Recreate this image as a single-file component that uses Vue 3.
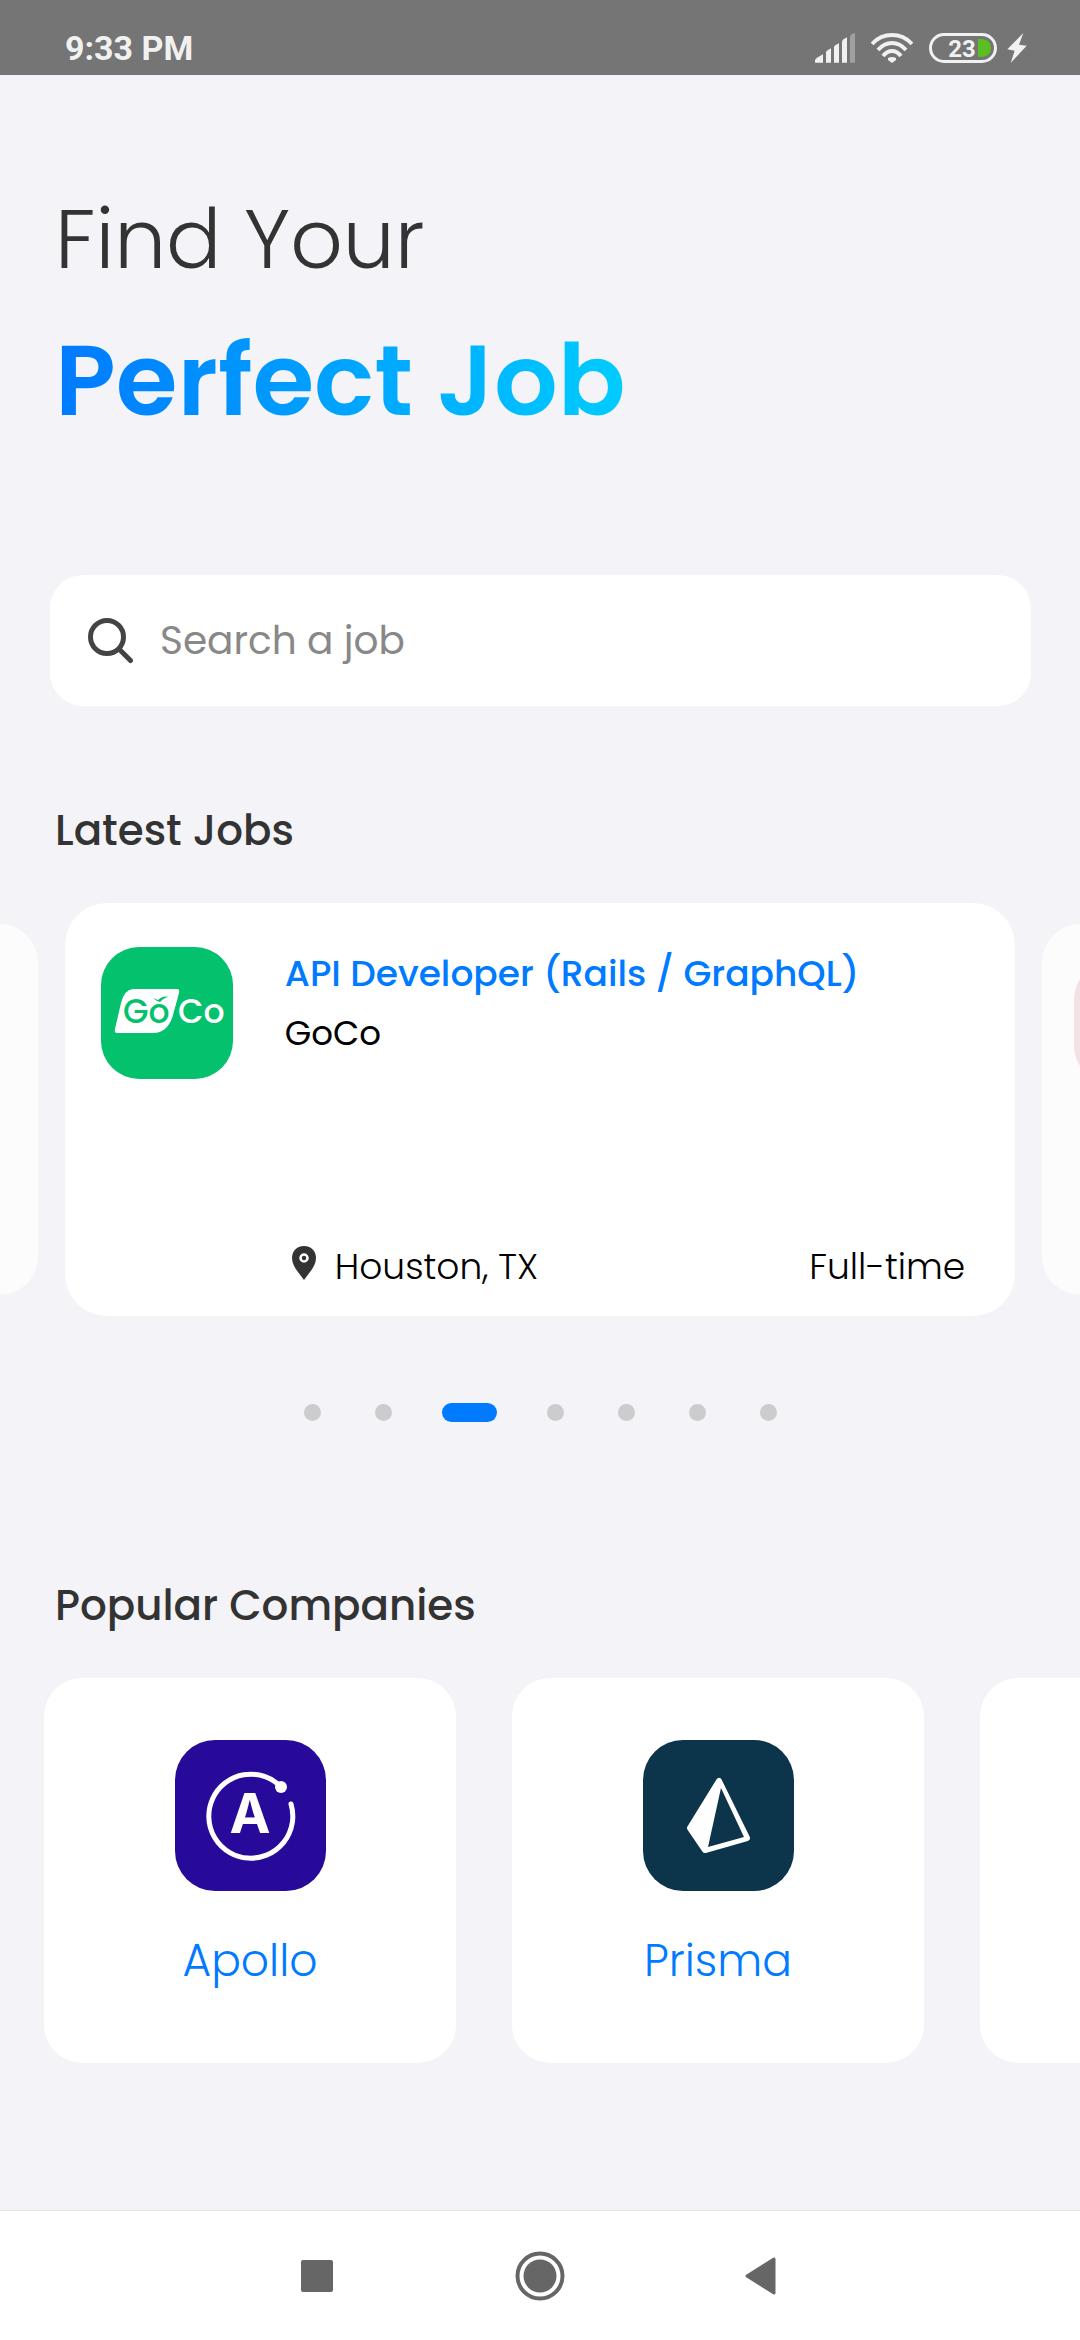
<script setup>
import { ref } from 'vue'

const query = ref('')
const activeJob = ref(2)
const jobCount = 7
const companies = [
  { name: 'Apollo', logo: 'apollo' },
  { name: 'Prisma', logo: 'prisma' },
  { name: '', logo: '' },
]
</script>

<template>
  <div class="screen">
    <div class="status">
      <span class="clock">9:33 PM</span>
      <div class="status-icons">
        <svg width="40" height="30" viewBox="0 0 120 90" fill="#f1f1f1" aria-hidden="true">
          <path d="M0 89V82Q1 77 6 74L24 64V89Z" />
          <path d="M33 89V58Q34 53 39 51L48 46V89Z" />
          <path d="M57 89V42Q58 37 63 35L72 31V89Z" />
          <path d="M81 89V26Q82 20 87 18L96 13V89Z" />
          <path d="M105 89V10Q106 5 111 3L120 0V89Z" fill="#a0a0a0" />
        </svg>
        <svg width="42" height="30" viewBox="0 0 42 30" fill="none" stroke="#f1f1f1" stroke-width="4" aria-hidden="true">
          <path d="M1 11Q9 2 21 2T41 11" />
          <path d="M7 17Q13 10 21 10T35 17" />
          <path d="M12 23Q16 18 21 18T30 23" />
          <path d="M17 25Q21 23 25 25V27L21 30L17 27Z" fill="#f1f1f1" stroke="none" />
        </svg>
        <svg class="battery" width="68" height="30" viewBox="0 0 68 30" aria-hidden="true">
          <rect x="1.5" y="1.5" width="65" height="27" rx="13.5" fill="none" stroke="#f1f1f1" stroke-width="3" />
          <path d="M49 6H53Q62 7 62 15T53 24H49Z" fill="#5bbf21" />
          <text x="33" y="24" text-anchor="middle">23</text>
        </svg>
        <svg class="bolt" width="20" height="30" viewBox="0 0 58 90" fill="#f1f1f1" aria-hidden="true">
          <path d="M48 0L0 49L22 53L10 90L58 38L35 35Z" />
        </svg>
      </div>
    </div>

    <main>
      <h1>
        <span class="lead">Find Your</span>
        <span class="headline">Perfect Job</span>
      </h1>

      <form class="search" role="search" @submit.prevent>
        <label for="job-search" aria-label="Search a job">
          <svg width="46" height="46" viewBox="0 0 46 46" fill="none" stroke="#444" stroke-width="5" stroke-linecap="round">
            <circle cx="19" cy="19" r="16.5" />
            <path d="M31 31L42.500 42.500" />
          </svg>
        </label>
        <input id="job-search" v-model="query" type="text" placeholder="Search a job" />
      </form>

      <h2>Latest Jobs</h2>
      <div class="carousel">
        <article class="job side"></article>
        <article class="job">
          <svg class="job-logo" viewBox="0 0 132 132" role="img" aria-label="GoCo">
            <rect width="132" height="132" rx="38" fill="#03c16c" />
            <path d="M32 42H76Q79 42 78 46L72 68Q67 86 52 86H16Q13 86 14 82L20 56Q23 43 32 42Z" fill="#fff" />
            <text x="22" y="76" fill="#03c16c">Go</text>
            <text x="77" y="76" fill="#fff">Co</text>
            <path d="M52 51L57 53Q62 48 68 50Q64 50 59 55L56 54Z" fill="#03c16c" />
          </svg>
          <div class="job-body">
            <div class="job-top">
              <a href="#" class="job-title">API Developer (Rails / GraphQL)</a>
              <span class="job-company">GoCo</span>
            </div>
            <div class="job-meta">
              <span class="place">
                <svg width="38" height="42" viewBox="0 0 38 42" aria-hidden="true">
                  <path d="M19 0C11 0 7 6 7 12C7 20 14 27 19 34C24 27 31 20 31 12C31 6 27 0 19 0Z" fill="#333" />
                  <circle cx="19" cy="12" r="3.500" fill="#333" stroke="#fff" stroke-width="2.500" />
                </svg>
                Houston, TX
              </span>
              <span>Full-time</span>
            </div>
          </div>
        </article>
        <article class="job side"><div class="logo-tile"></div></article>
      </div>

      <div class="dots">
        <button
          v-for="n in jobCount"
          :key="n"
          type="button"
          :class="['dot', { active: n - 1 === activeJob }]"
          :aria-label="`Job ${n}`"
          @click="activeJob = n - 1"
        ></button>
      </div>

      <h2 class="popular">Popular Companies</h2>
      <div class="companies">
        <article v-for="(company, i) in companies" :key="i" class="company">
          <svg v-if="company.logo === 'apollo'" class="company-logo" viewBox="0 0 151 151" aria-hidden="true">
            <rect width="151" height="151" rx="40" fill="#280a9a" />
            <path d="M106 47A42 42 0 1 0 116 64" fill="none" stroke="#fff" stroke-width="5" stroke-linecap="round" />
            <circle cx="106" cy="47" r="6" fill="#fff" />
            <text x="75" y="93" text-anchor="middle" fill="#fff">A</text>
          </svg>
          <svg v-else-if="company.logo === 'prisma'" class="company-logo" viewBox="0 0 151 151" aria-hidden="true">
            <rect width="151" height="151" rx="40" fill="#0c344b" />
            <path d="M76 41L47 88L62 110L104 98Z" fill="#fff" stroke="#fff" stroke-width="6" stroke-linejoin="round" />
            <path d="M78 48L65 107L101 97Z" fill="#0c344b" />
          </svg>
          <a v-if="company.name" href="#">{{ company.name }}</a>
        </article>
      </div>
    </main>

    <nav class="system-nav">
      <button type="button" aria-label="Recent apps">
        <svg width="50" height="50" viewBox="0 0 50 50"><rect x="8" y="9" width="32" height="32" rx="2" fill="#666" /></svg>
      </button>
      <button type="button" aria-label="Home">
        <svg width="50" height="50" viewBox="0 0 50 50">
          <circle cx="25" cy="25" r="22.500" fill="none" stroke="#666" stroke-width="4" />
          <circle cx="25" cy="25" r="16.500" fill="#666" />
        </svg>
      </button>
      <button type="button" aria-label="Back">
        <svg width="50" height="50" viewBox="0 0 50 50">
          <path d="M10 25L37 8V42Z" fill="#666" stroke="#666" stroke-width="3" stroke-linejoin="round" />
        </svg>
      </button>
    </nav>
  </div>
</template>

<style>
body {
  margin: 0;
  background: #f3f3f8;
}
</style>

<style scoped>
* {
  box-sizing: border-box;
}

.screen {
  display: flex;
  flex-direction: column;
  min-height: 100vh;
  overflow: hidden;
  background: #f3f3f8;
  color: #000;
  font-family: Poppins, Inter, "Open Sans", sans-serif;
}

.status {
  display: flex;
  align-items: center;
  justify-content: space-between;
  height: 75px;
  padding: 20px 53px 0 65px;
  background: #757575;
}

.clock {
  color: #f1f1f1;
  font: 700 34px/40px Roboto, sans-serif;
}

.status-icons {
  display: flex;
  align-items: center;
  gap: 16px;
}

.bolt {
  margin-left: -6px;
}

.battery text {
  fill: #f1f1f1;
  font: 700 24px Roboto, sans-serif;
}

h1 {
  display: flex;
  flex-direction: column;
  align-items: flex-start;
  gap: 20px;
  margin: 0;
  padding: 105px 55px 0;
  line-height: 120px;
}

.lead {
  color: #333;
  font-size: 82px;
  font-weight: 300;
}

.headline {
  background: linear-gradient(90deg, #007aff, #00ccff);
  background-clip: text;
  -webkit-background-clip: text;
  color: transparent;
  font-size: 100px;
  font-weight: 600;
}

.search {
  display: flex;
  align-items: center;
  gap: 26px;
  height: 131px;
  margin: 135px 49px 0 50px;
  padding: 0 38px;
  border-radius: 33px;
  background: #fff;
}

.search label {
  display: flex;
}

.search input {
  flex: 1;
  min-width: 0;
  border: 0;
  padding: 0;
  outline: 0;
  background: none;
  color: #333;
  font: 400 39px/60px Poppins, Inter, sans-serif;
}

.search input::placeholder {
  color: #888;
  opacity: 1;
}

h2 {
  margin: 95px 55px 42px;
  color: #333;
  font-size: 42px;
  font-weight: 500;
  line-height: 60px;
}

.carousel {
  display: flex;
  align-items: center;
  justify-content: center;
  gap: 27px;
}

.job {
  display: flex;
  flex: 0 0 88%;
  gap: 52px;
  min-height: 413px;
  padding: 44px 50px 22px 36px;
  border-radius: 42px;
  background: #fff;
}

.job.side {
  flex-basis: 79%;
  min-height: 371px;
  padding: 39px 32px;
  border-radius: 38px;
  background: #fcfcfd;
}

.logo-tile {
  width: 119px;
  height: 119px;
  border-radius: 36px;
  background: #f2e2e5;
}

.job-logo {
  flex: none;
  width: 132px;
  height: 132px;
}

.job-logo text {
  font: 500 33px Poppins, Lato, sans-serif;
}

.job-body {
  display: flex;
  flex: 1;
  flex-direction: column;
  justify-content: space-between;
  font-size: 36px;
  line-height: 54px;
}

.job-top {
  display: flex;
  flex-direction: column;
  gap: 5px;
}

.job-title {
  color: #007aff;
  font-weight: 500;
  text-decoration: none;
  white-space: nowrap;
}

.job-company {
  font-size: 34px;
}

.job-meta {
  display: flex;
  justify-content: space-between;
  font-weight: 300;
}

.place {
  display: flex;
  align-items: center;
  gap: 12px;
}

.dots {
  display: flex;
  align-items: center;
  justify-content: center;
  gap: 54px;
  height: 19px;
  margin-top: 87px;
}

.dot {
  width: 17px;
  height: 17px;
  padding: 0;
  border: 0;
  border-radius: 10px;
  background: #ccccce;
}

.dot.active {
  width: 55px;
  height: 19px;
  margin: 0 -4px;
  background: #007aff;
}

.popular {
  margin-top: 154px;
}

.companies {
  display: flex;
  gap: 56px;
  padding-left: 44px;
}

.company {
  display: flex;
  flex: 0 0 412px;
  flex-direction: column;
  align-items: center;
  gap: 40px;
  min-height: 385px;
  padding: 62px 24px 72px;
  border-radius: 38px;
  background: #fff;
}

.company-logo {
  width: 151px;
  height: 151px;
}

.company-logo text {
  font: 700 55px Inter, sans-serif;
}

.company a {
  color: #007aff;
  font-size: 44px;
  font-weight: 300;
  line-height: 60px;
  text-decoration: none;
}

.system-nav {
  display: flex;
  align-items: center;
  justify-content: center;
  gap: 172px;
  height: 130px;
  margin-top: auto;
  border-top: 1px solid #e2e2e4;
  background: #fff;
}

.system-nav button {
  display: flex;
  padding: 0;
  border: 0;
  background: none;
}
</style>
